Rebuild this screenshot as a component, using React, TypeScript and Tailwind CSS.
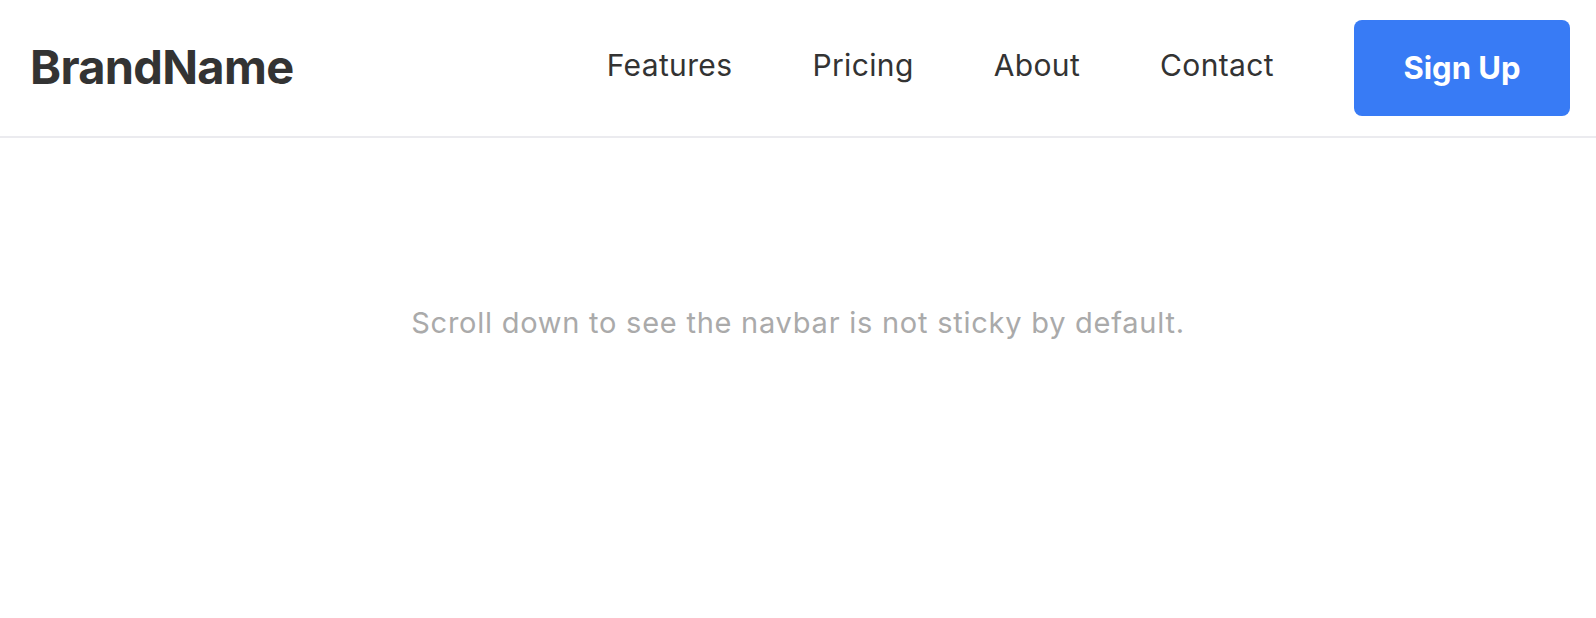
export default function App() {
  const links = ["Features", "Pricing", "About", "Contact"];
  return (
    <div className="min-h-[618px] bg-white" style={{ fontFamily: "Inter, 'Noto Sans', sans-serif" }}>
      <nav className="flex h-[138px] items-center justify-between border-b-2 border-[#ebebef] pl-[30px] pr-[26px]">
        <div className="mb-[3px] text-[47px] font-bold leading-none tracking-[-0.015em] text-[#333333]">BrandName</div>
        <div className="flex items-center">
          <div className="mb-[6px] flex items-center gap-[80px]">
            {links.map((l) => (
              <a key={l} className="text-[30px] leading-none tracking-[0.012em] text-[#333333]">
                {l}
              </a>
            ))}
          </div>
          <button className="ml-[80px] flex h-[96px] w-[216px] items-center justify-center rounded-[8px] bg-[#387bf5] text-[31px] font-bold text-white">
            Sign Up
          </button>
        </div>
      </nav>
      <main className="flex justify-center pt-[163px]">
        <p className="text-[29px] leading-[44px] tracking-[0.026em] text-[#aaaaaa]">Scroll down to see the navbar is not sticky by default.</p>
      </main>
    </div>
  );
}
